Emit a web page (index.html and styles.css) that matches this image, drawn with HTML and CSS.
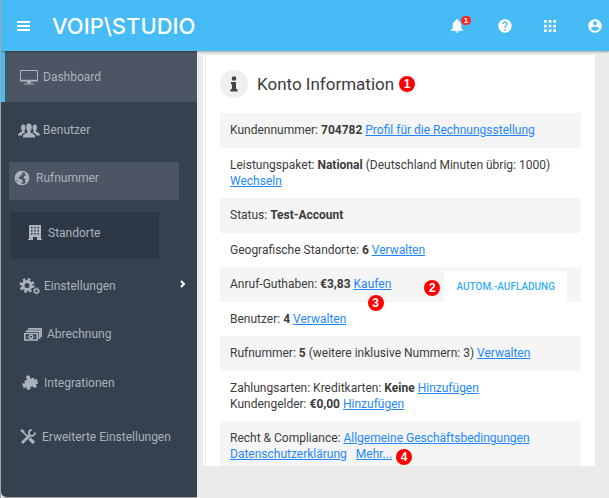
FILE: index.html
```html
<!DOCTYPE html>
<html lang="de">
<head>
<meta charset="utf-8">
<meta name="viewport" content="width=device-width, initial-scale=1">
<title>VoIPstudio</title>
<link rel="stylesheet" href="styles.css">
</head>
<body>
<header class="topbar">
  <button class="icon-btn menu-btn" aria-label="Menü">
    <svg width="13" height="10" viewBox="0 0 13 10"><path d="M0 1h13M0 5h13M0 9h13" stroke="#fff" stroke-width="2"/></svg>
  </button>
  <a class="logo" href="#">VOIP\STUDIO</a>
  <div class="tools">
    <button class="icon-btn bell" aria-label="Benachrichtigungen">
      <svg width="16" height="16" viewBox="0 0 24 24" fill="#fff"><path d="M12 22c1.500 0 2.500-.9 2.500-2h-5c0 1.100 1 2 2.500 2zm6.500-6v-5c0-3.070-1.640-5.640-4.500-6.320V3.500c0-.83-.9-1.500-2-1.500s-2 .67-2 1.500v1.180C7.130 5.360 5.500 7.920 5.500 11v5l-3 2.500V19h19v-.5z"/></svg>
      <span class="count">1</span>
    </button>
    <button class="icon-btn" aria-label="Hilfe">
      <svg width="16" height="16" viewBox="0 0 24 24" fill="#fff"><path d="M12 2C6.480 2 2 6.480 2 12s4.480 10 10 10 10-4.480 10-10S17.520 2 12 2zm1 17h-2v-2h2v2zm2.070-7.750l-.9.920C13.450 12.900 13 13.500 13 15h-2v-.5c0-1.100.45-2.100 1.170-2.830l1.240-1.260c.37-.36.59-.86.59-1.410 0-1.100-.9-2-2-2s-2 .9-2 2H8c0-2.210 1.790-4 4-4s4 1.790 4 4c0 .88-.36 1.680-.93 2.250z"/></svg>
    </button>
    <button class="icon-btn" aria-label="Apps">
      <svg width="16" height="16" viewBox="0 0 16 16" fill="#fff"><path d="M2 2h2.700v2.700H2zM6.700 2h2.700v2.700H6.700zM11.300 2H14v2.700h-2.700zM2 6.700h2.700v2.700H2zM6.700 6.700h2.700v2.700H6.700zM11.300 6.700H14v2.700h-2.700zM2 11.300h2.700V14H2zM6.700 11.300h2.700V14H6.700zM11.300 11.300H14V14h-2.700z"/></svg>
    </button>
    <button class="icon-btn" aria-label="Konto">
      <svg width="16" height="16" viewBox="0 0 24 24" fill="#fff"><path d="M12 2C6.480 2 2 6.480 2 12s4.480 10 10 10 10-4.480 10-10S17.520 2 12 2zm0 3c1.660 0 3 1.340 3 3s-1.340 3-3 3-3-1.340-3-3 1.340-3 3-3zm0 14.200c-2.500 0-4.710-1.280-6-3.220.03-1.990 4-3.080 6-3.080 1.990 0 5.970 1.090 6 3.080-1.290 1.940-3.500 3.220-6 3.220z"/></svg>
    </button>
  </div>
</header>
<div class="shell">
  <nav class="sidebar">
    <a class="item dashboard" href="#">
      <svg width="18" height="16" viewBox="0 0 18 16" fill="none" stroke="currentColor"><path d="M.5 1.500h17v10.500H.5z"/><path d="M.5 11.500h17" stroke-width="1.500"/><path d="M7 12h4v2.500H7z" fill="currentColor" stroke="none"/><path d="M4 15h10"/></svg>
      Dashboard</a>
    <a class="item users" href="#">
      <svg width="22" height="15" viewBox="0 0 22 15" fill="currentColor"><ellipse cx="5.200" cy="4.500" rx="2.200" ry="3"/><ellipse cx="16.800" cy="4.500" rx="2.200" ry="3"/><path d="M0 12.500C0 10.500 1 10 4 8.500V6.500h2.500v2l1 .8c-2 1-3.300 1.500-3.700 3.200zM22 12.500c0-2-1-2.500-4-4V6.500h-2.500v2l-1 .8c2 1 3.300 1.500 3.700 3.200z"/><ellipse cx="11" cy="4.200" rx="2.800" ry="3.800"/><path d="M9.300 7h3.400v2.700c3 1.300 4.500 1.500 4.500 4.800H4.800c0-3.300 1.500-3.500 4.500-4.800z"/></svg>
      Benutzer</a>
    <a class="item numbers" href="#">
      <svg width="16" height="16" viewBox="0 0 16 16"><circle cx="8" cy="8" r="6.700" fill="none" stroke="currentColor" stroke-width="1.300"/><path fill="currentColor" d="M1.500 6l2-3.500L7 1l2.500.5L8 3l1 1-2.500 1.500-1 1.500-1.500 1 2 1 2 .5 1 2-1.500 1.500L7 15l-3-1.500-.5-3L1.500 9zM11.500 2l2.500 2 1 4-.7 3-2.300 2-1-2.500.5-1.500L9.500 8l.5-2 2-.5L10.800 4z"/></svg>
      Rufnummer</a>
    <a class="item sites" href="#">
      <svg width="14" height="15" viewBox="0 0 14 15"><path fill="currentColor" fill-rule="evenodd" d="M1 0h12v14h1v1H9v-3H5v3H0v-1h1zM3 2v1.500h1.500V2zM6.200 2v1.500h1.500V2zM9.500 2v1.500H11V2zM3 5v1.500h1.500V5zM6.200 5v1.500h1.500V5zM9.500 5v1.500H11V5zM3 8v1.500h1.500V8zM6.200 8v1.500h1.500V8zM9.500 8v1.500H11V8z"/></svg>
      Standorte</a>
    <a class="item settings" href="#">
      <svg width="21" height="17" viewBox="0 0 21 17" fill="none" stroke="currentColor"><circle cx="8" cy="7.500" r="4" stroke-width="3"/><circle cx="8" cy="7.500" r="6.300" stroke-width="2.400" stroke-dasharray="2.500 2.448"/><circle cx="17.500" cy="13" r="2" stroke-width="1.400"/><circle cx="17.500" cy="13" r="3" stroke-width="1" stroke-dasharray="1.200 1.156"/></svg>
      Einstellungen
      <svg class="chevron" width="6" height="8" viewBox="0 0 6 8" fill="none" stroke="#fff" stroke-width="2"><path d="M1 1l3 3-3 3"/></svg></a>
    <a class="item billing" href="#">
      <svg width="18" height="13" viewBox="0 0 18 13" fill="none" stroke="currentColor"><path d="M.8 5.500h12.400v6.500H.8z" stroke-width="1.600"/><path d="M2 3.200h13.500V11M4 .9h13.300V9" stroke-width="1.700"/><circle cx="7" cy="8.800" r="1.800" stroke-width="1.500"/><path d="M2.500 9h1M10.500 9h1"/></svg>
      Abrechnung</a>
    <a class="item integrations" href="#">
      <svg width="16" height="16" viewBox="0 0 24 24" fill="currentColor"><g transform="rotate(-18 12 12)"><path d="M5 6h4.500l1-2h3l1 2H20v4l3.500-1v8L20 16v5h-5l-.5-3h-4L10 21H5v-5l-4.500 1V9L5 10z"/><circle cx="12" cy="3" r="3"/></g></svg>
      Integrationen</a>
    <a class="item advanced" href="#">
      <svg width="16" height="16" viewBox="0 0 16 16" fill="none" stroke="currentColor"><path d="M2 14l8.500-8.500" stroke-width="2.600"/><path d="M14.800 3.500a3 3 0 1 1-3-2.600" stroke-width="1.900"/><path d="M2 2l7 7" stroke-width="1.700"/><path d="M1 1l3 2" stroke-width="2.400"/><path d="M9.500 9.500l4.500 4.500" stroke-width="3.200"/></svg>
      Erweiterte Einstellungen</a>
  </nav>
  <main class="content">
    <div class="rail"></div>
    <section class="card">
      <h1 class="title">
        <span class="info"><svg width="8" height="16" viewBox="0 0 8 16" fill="#444"><circle cx="4" cy="2.500" r="2.300"/><path d="M1 6h5v7h1.500v2.500h-7V13H2V8.500H1z"/></svg></span>
        Konto Information <span class="mark">1</span>
      </h1>
      <ul class="rows">
        <li>Kundennummer: <b>704782</b> <a href="#">Profil für die Rechnungsstellung</a></li>
        <li>Leistungspaket: <b>National</b> (Deutschland Minuten übrig: 1000) <a href="#">Wechseln</a></li>
        <li>Status: <b>Test-Account</b></li>
        <li>Geografische Standorte: <b>6</b> <a href="#">Verwalten</a></li>
        <li class="credit"><span>Anruf-Guthaben: <b>€3,83</b> <a class="buy" href="#">Kaufen<span class="mark">3</span></a></span>
          <span class="topup"><span class="mark">2</span><button class="auto">AUTOM.-AUFLADUNG</button></span></li>
        <li>Benutzer: <b>4</b> <a href="#">Verwalten</a></li>
        <li>Rufnummer: <b>5</b> (weitere inklusive Nummern: 3) <a href="#">Verwalten</a></li>
        <li>Zahlungsarten: Kreditkarten: <b>Keine</b> <a href="#">Hinzufügen</a><br>Kundengelder: <b>€0,00</b> <a href="#">Hinzufügen</a></li>
        <li>Recht &amp; Compliance: <a href="#">Allgemeine Geschäftsbedingungen</a><br><a href="#">Datenschutzerklärung</a><a class="more" href="#">Mehr...<span class="mark">4</span></a></li>
      </ul>
    </section>
  </main>
</div>
</body>
</html>
```
FILE: styles.css
```css
* { box-sizing: border-box; }
body {
  margin: 0;
  min-height: 100vh;
  display: flex;
  flex-direction: column;
  border-left: 1px solid #a5a5a5;
  background: #ebebeb;
  color: #3c3c3c;
  font: 12px/16px Roboto, sans-serif;
}
button { font: inherit; border: 0; padding: 0; background: none; cursor: pointer; }
svg { display: block; flex: none; }

.topbar {
  height: 51px;
  display: flex;
  align-items: center;
  padding: 0 6px 0 16px;
  background: #46bbf5;
  box-shadow: 0 1px 2px rgba(0, 0, 0, .3);
  position: relative;
}
.icon-btn { position: relative; display: flex; }
.logo {
  margin-left: 22px;
  color: #fff;
  font: 500 22px/28px Inter, sans-serif;
  text-decoration: none;
}
.tools { display: flex; gap: 29px; margin-left: auto; }
.bell { margin-right: 3px; }
.count {
  position: absolute;
  left: 12px;
  top: -2px;
  width: 10px;
  height: 9px;
  border-radius: 5px;
  background: #f22;
  color: #fff;
  font: bold 8px/9px "Liberation Sans", sans-serif;
}

.shell { flex: 1; display: flex; }
.sidebar {
  width: 196px;
  flex: none;
  display: flex;
  flex-direction: column;
  background: #34414e;
  border-bottom: 1px solid #a5a5a5;
  border-bottom-left-radius: 6px;
}
.item {
  display: flex;
  align-items: center;
  gap: 6px;
  color: #abb2ba;
  text-decoration: none;
}
.dashboard { height: 51px; padding-left: 15px; gap: 5px; background: #4b5563; border-left: 4px solid #46bbf5; }
.users { height: 56px; padding-left: 17px; gap: 3px; }
.numbers { height: 38px; margin: 4px 18px 12px 8px; padding: 0 0 6px 5px; background: #4b5563; }
.sites { height: 47px; margin: 0 38px 0 9px; padding: 0 0 6px 18px; background: #2d3846; }
.settings { height: 54px; padding: 0 11px 0 18px; gap: 4px; }
.chevron { margin: 0 0 4px auto; }
.billing { height: 42px; padding-left: 23px; gap: 5px; }
.integrations { height: 56px; padding-left: 21px; }
.advanced { height: 52px; padding-left: 19px; }

.content {
  flex: 1;
  display: flex;
  align-items: flex-start;
  gap: 1px;
  padding: 4px 14px 32px 6px;
}
.rail { width: 2px; align-self: stretch; background: #fff; }
.card { flex: 1; padding: 0 14px; background: #fff; }
.title {
  display: flex;
  align-items: center;
  height: 58px;
  margin: 0;
  font-size: 17px;
  font-weight: 400;
}
.info {
  display: grid;
  place-items: center;
  width: 28px;
  height: 28px;
  margin-right: 9px;
  border-radius: 50%;
  background: #f0f0f0;
}
.mark {
  display: inline-block;
  width: 16px;
  height: 16px;
  border-radius: 50%;
  background: #f00;
  color: #fff;
  font: bold 12px/16px "Liberation Sans", sans-serif;
  text-align: center;
}
.title .mark { margin-left: 5px; }
.rows { list-style: none; margin: 0; padding: 0; }
.rows li { padding: 9px 10px; }
.rows li:nth-child(odd) { padding-bottom: 10px; background: #f5f5f5; }
.rows li:last-child { padding-bottom: 4px; }
.rows a { color: #1e88fa; }
.credit { display: flex; justify-content: space-between; }
.topup { display: flex; gap: 4px; margin: -5px 4px -10px 0; }
.topup .mark { margin-top: 9px; }
.auto { padding: 0 12px; background: #fff; color: #35aff0; font-size: 10px; font-weight: 500; }
.buy, .more { position: relative; }
.buy .mark, .more .mark { position: absolute; }
.buy .mark { left: 14px; top: 18px; }
.more { margin-left: 9px; }
.more .mark { right: -20px; top: 2px; }
```
